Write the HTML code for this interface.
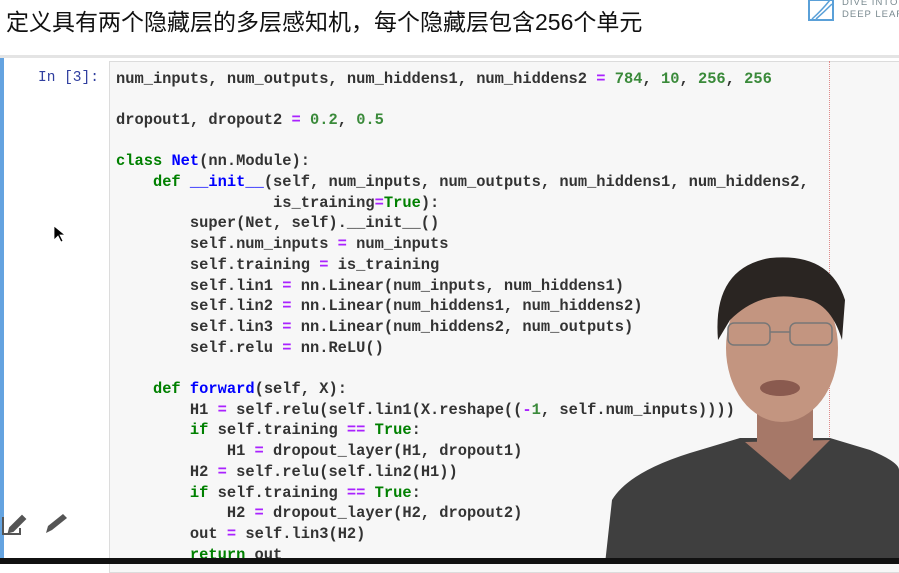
<!DOCTYPE html>
<html><head><meta charset="utf-8"><style>
body{margin:0;width:899px;height:564px;overflow:hidden;background:#fff;position:relative;font-family:"Liberation Sans","Noto Sans CJK SC",sans-serif}
.title{position:absolute;left:6px;top:3px;font-size:23px;color:#111;white-space:nowrap;font-family:"Liberation Sans","Noto Sans CJK SC",sans-serif}
.sep{position:absolute;left:0;top:55px;width:899px;height:3px;background:#e4e4e4}
.bar{position:absolute;left:0;top:58px;width:4px;height:506px;background:#64a3e0}
.prompt{position:absolute;left:38px;top:68px;font-family:"Liberation Mono",monospace;font-size:14.5px;color:#303f9f;line-height:20px}
.box{position:absolute;left:109px;top:61px;width:800px;height:510px;background:#f7f7f7;border:1px solid #dcdcdc}
.rule{position:absolute;left:829px;top:61px;height:500px;border-left:1px dotted #e08a8a}
pre{position:absolute;left:116px;top:68.5px;margin:0;font-family:"Liberation Mono",monospace;font-weight:bold;font-size:15.4px;line-height:20.7px;color:#333}
.k{color:#008000}.o{color:#aa22ff}.n{color:#3a8a3a}.f{color:#0000ff}
.bottom{position:absolute;left:0;top:558px;width:899px;height:6px;background:#111}
</style></head><body>
<div class="title">定义具有两个隐藏层的多层感知机，每个隐藏层包含256个单元</div>
<svg style="position:absolute;left:808px;top:0" width="28" height="22"><rect x="1" y="0" width="24" height="20" fill="none" stroke="#5aa0d8" stroke-width="2"/><path d="M4 19 Q14 10 22 0 M8 19 Q16 12 24 4" stroke="#5aa0d8" fill="none" stroke-width="1.5"/></svg>
<div style="position:absolute;left:842px;top:-3px;font-size:9.5px;letter-spacing:1px;color:#7a8a90;line-height:12px;white-space:nowrap">DIVE INTO<br>DEEP LEAR</div>
<div class="sep"></div>
<div class="bar"></div>
<div class="prompt">In [3]:</div>
<div class="box"></div>
<div class="rule"></div>
<pre>num_inputs, num_outputs, num_hiddens1, num_hiddens2 <span class="o">=</span> <span class="n">784</span>, <span class="n">10</span>, <span class="n">256</span>, <span class="n">256</span>

dropout1, dropout2 <span class="o">=</span> <span class="n">0.2</span>, <span class="n">0.5</span>

<span class="k">class</span> <span class="f">Net</span>(nn.Module):
    <span class="k">def</span> <span class="f">__init__</span>(self, num_inputs, num_outputs, num_hiddens1, num_hiddens2,
                 is_training<span class="o">=</span><span class="k">True</span>):
        super(Net, self).__init__()
        self.num_inputs <span class="o">=</span> num_inputs
        self.training <span class="o">=</span> is_training
        self.lin1 <span class="o">=</span> nn.Linear(num_inputs, num_hiddens1)
        self.lin2 <span class="o">=</span> nn.Linear(num_hiddens1, num_hiddens2)
        self.lin3 <span class="o">=</span> nn.Linear(num_hiddens2, num_outputs)
        self.relu <span class="o">=</span> nn.ReLU()

    <span class="k">def</span> <span class="f">forward</span>(self, X):
        H1 <span class="o">=</span> self.relu(self.lin1(X.reshape((<span class="o">-</span><span class="n">1</span>, self.num_inputs))))
        <span class="k">if</span> self.training <span class="o">==</span> <span class="k">True</span>:
            H1 <span class="o">=</span> dropout_layer(H1, dropout1)
        H2 <span class="o">=</span> self.relu(self.lin2(H1))
        <span class="k">if</span> self.training <span class="o">==</span> <span class="k">True</span>:
            H2 <span class="o">=</span> dropout_layer(H2, dropout2)
        out <span class="o">=</span> self.lin3(H2)
        <span class="k">return</span> out</pre>
<svg style="position:absolute;left:0;top:0" width="899" height="564">
<path d="M54 226 L54 240 L58 236 L61 242 L63 241 L60 235 L65 235 Z" fill="#000" stroke="#fff" stroke-width="0.8"/>
<g stroke="#555" stroke-width="2" fill="none"><path d="M3 517 L3 534 L20 534 L20 528"/><path d="M10 528 L22 516 L25 519 L13 531 L9 532 Z" fill="#555"/></g>
<path d="M46 533 L48 526 L63 514 L67 518 L52 530 Z" fill="#555"/>
<path d="M605 564 L612 500 Q630 470 700 450 L740 438 L830 438 L870 450 Q899 462 899 470 L899 558 Z" fill="#3f3f3f"/>
<path d="M745 442 L790 480 L830 440 Z" fill="#a67868"/>
<rect x="757" y="400" width="56" height="50" fill="#a67868"/>
<ellipse cx="782" cy="348" rx="56" ry="74" fill="#c39580"/>
<path d="M718 340 Q712 268 770 258 Q830 252 845 300 L842 340 Q830 300 800 298 Q760 290 730 320 Z" fill="#2a2522"/>
<g fill="none" stroke="#777" stroke-width="1.5"><rect x="728" y="323" width="42" height="22" rx="6"/><rect x="790" y="323" width="42" height="22" rx="6"/><path d="M770 332 L790 332"/></g>
<ellipse cx="780" cy="388" rx="20" ry="8" fill="#8a5a4f"/>
</svg>
<div class="bottom"></div>
</body></html>
